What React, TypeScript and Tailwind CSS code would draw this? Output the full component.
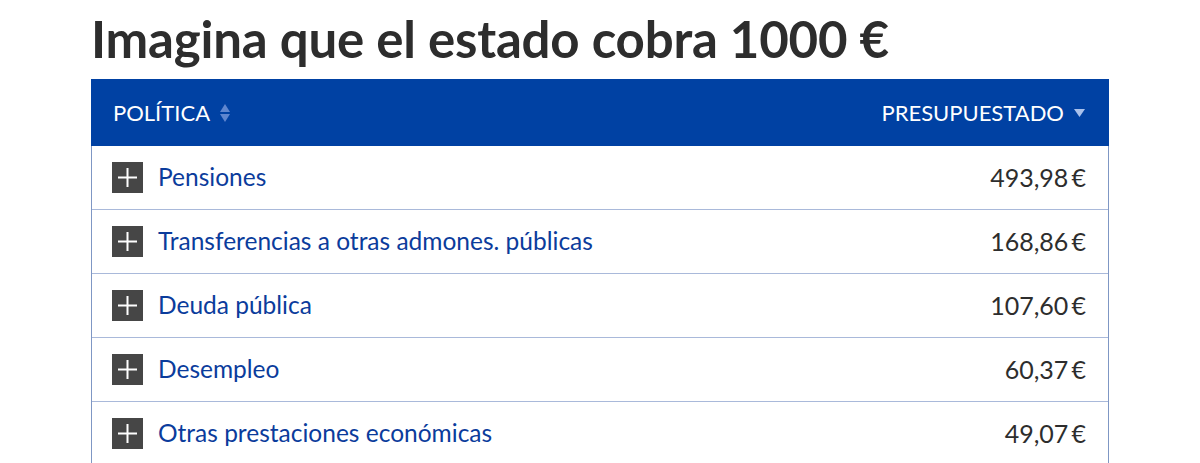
import React from "react";

const rows = [
  { name: "Pensiones", value: "493,98 €" },
  { name: "Transferencias a otras admones. públicas", value: "168,86 €" },
  { name: "Deuda pública", value: "107,60 €" },
  { name: "Desempleo", value: "60,37 €" },
  { name: "Otras prestaciones económicas", value: "49,07 €" },
];

function PlusBox() {
  return (
    <div className="w-[31px] h-[31px] bg-[#464646] flex items-center justify-center shrink-0">
      <svg width="19" height="19" viewBox="0 0 19 19">
        <rect x="8.5" y="0" width="2" height="19" fill="#fff" />
        <rect x="0" y="8.5" width="19" height="2" fill="#fff" />
      </svg>
    </div>
  );
}

export default function App() {
  return (
    <div className="bg-white w-[1200px] h-[463px] overflow-hidden" style={{ fontFamily: "Lato, 'Noto Sans', sans-serif" }}>
      <div className="ml-[91px] w-[1018px]">
        <h1 className="pt-[8px] text-[51px] leading-[61px] font-bold text-[#2d2d2d] tracking-[-0.2px]">
          Imagina que el estado cobra 1000 €
        </h1>
        <div className="mt-[10px] border-r border-l border-[#7f97c4]">
          <div className="h-[67px] bg-[#0041a3] flex items-center justify-between pl-[22px] pr-[24px] text-white text-[22px] -mx-px">
            <div className="flex items-center gap-[9px]">
              <span>POLÍTICA</span>
              <svg width="12" height="20" viewBox="0 0 12 20">
                <polygon points="6,1 11,9 1,9" fill="#5f86cf" />
                <polygon points="6,19 11,11 1,11" fill="#5f86cf" />
              </svg>
            </div>
            <div className="flex items-center gap-[10px]">
              <span>PRESUPUESTADO</span>
              <svg width="11" height="9" viewBox="0 0 11 9">
                <polygon points="0,1 11,1 5.5,9" fill="#a9c1ec" />
              </svg>
            </div>
          </div>
          {rows.map((r) => (
            <div
              key={r.name}
              className="h-[64px] border-b border-[#a9b9da] flex items-center justify-between pl-[20px] pr-[22px]"
            >
              <div className="flex items-center gap-[15px]">
                <PlusBox />
                <span className="text-[24.5px] text-[#0b3c9c]">{r.name}</span>
              </div>
              <span className="text-[25px] text-[#2d2d2d]">{r.value.replace(" ", "\u2009")}</span>
            </div>
          ))}
        </div>
      </div>
    </div>
  );
}
